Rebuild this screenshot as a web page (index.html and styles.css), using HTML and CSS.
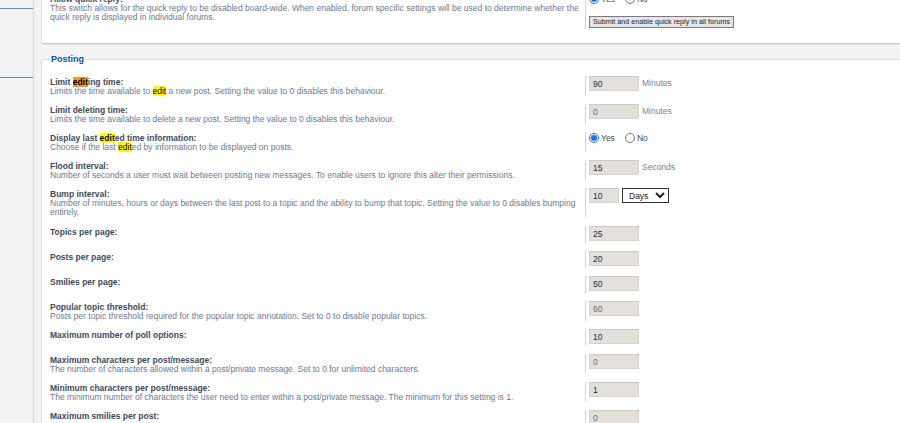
FILE: index.html
```html
<!DOCTYPE html>
<html lang="en">
<head>
  <meta charset="UTF-8">
  <title>Post settings</title>
  <link rel="stylesheet" href="styles.css">
</head>
<body>
  <div class="page">
    <div class="side">
      <div class="menu-item first"></div>
      <div class="menu-item"></div>
    </div>
    <div class="main">
      <fieldset class="panel top">
        <dl>
          <dt><label>Allow quick reply:</label><span class="explain">This switch allows for the quick reply to be disabled board-wide. When enabled, forum specific settings will be used to determine whether the quick reply is displayed in individual forums.</span></dt>
          <dd>
            <div class="radios"><label><input type="radio" name="qr" checked> Yes</label><label><input type="radio" name="qr"> No</label></div>
            <button class="btn">Submit and enable quick reply in all forums</button>
          </dd>
        </dl>
      </fieldset>

      <fieldset class="panel">
        <legend>Posting</legend>
        <dl>
          <dt><label>Limit <span class="hl cur">edit</span>ing time:</label><span class="explain">Limits the time available to <span class="hl">edit</span> a new post. Setting the value to 0 disables this behaviour.</span></dt>
          <dd><input class="num" type="text" value="90"> <span class="unit">Minutes</span></dd>
        </dl>
        <dl>
          <dt><label>Limit deleting time:</label><span class="explain">Limits the time available to delete a new post. Setting the value to 0 disables this behaviour.</span></dt>
          <dd><input class="num dim" type="text" value="0"> <span class="unit">Minutes</span></dd>
        </dl>
        <dl>
          <dt><label>Display last <span class="hl">edit</span>ed time information:</label><span class="explain">Choose if the last <span class="hl">edit</span>ed by information to be displayed on posts.</span></dt>
          <dd><div class="radios"><label><input type="radio" name="le" checked> Yes</label><label><input type="radio" name="le"> No</label></div></dd>
        </dl>
        <dl>
          <dt><label>Flood interval:</label><span class="explain">Number of seconds a user must wait between posting new messages. To enable users to ignore this alter their permissions.</span></dt>
          <dd><input class="num" type="text" value="15"> <span class="unit">Seconds</span></dd>
        </dl>
        <dl class="tall">
          <dt><label>Bump interval:</label><span class="explain">Number of minutes, hours or days between the last post to a topic and the ability to bump that topic. Setting the value to 0 disables bumping entirely.</span></dt>
          <dd><input class="num short" type="text" value="10"> <select class="sel"><option>Days</option><option>Hours</option><option>Minutes</option></select></dd>
        </dl>
        <dl>
          <dt><label>Topics per page:</label></dt>
          <dd><input class="num" type="text" value="25"></dd>
        </dl>
        <dl>
          <dt><label>Posts per page:</label></dt>
          <dd><input class="num" type="text" value="20"></dd>
        </dl>
        <dl>
          <dt><label>Smilies per page:</label></dt>
          <dd><input class="num" type="text" value="50"></dd>
        </dl>
        <dl>
          <dt><label>Popular topic threshold:</label><span class="explain">Posts per topic threshold required for the popular topic annotation. Set to 0 to disable popular topics.</span></dt>
          <dd><input class="num dim" type="text" value="60"></dd>
        </dl>
        <dl>
          <dt><label>Maximum number of poll options:</label></dt>
          <dd><input class="num" type="text" value="10"></dd>
        </dl>
        <dl>
          <dt><label>Maximum characters per post/message:</label><span class="explain">The number of characters allowed within a post/private message. Set to 0 for unlimited characters.</span></dt>
          <dd><input class="num dim" type="text" value="0"></dd>
        </dl>
        <dl>
          <dt><label>Minimum characters per post/message:</label><span class="explain">The minimum number of characters the user need to enter within a post/private message. The minimum for this setting is 1.</span></dt>
          <dd><input class="num" type="text" value="1"></dd>
        </dl>
        <dl>
          <dt><label>Maximum smilies per post:</label></dt>
          <dd><input class="num dim" type="text" value="0"></dd>
        </dl>
      </fieldset>
    </div>
  </div>
</body>
</html>
```

FILE: styles.css
```css
html, body { margin: 0; padding: 0; }
body { font-family: "Liberation Sans", Arial, sans-serif; font-size: 8.5px; line-height: 9px; background: #f3f3f3; color: #3d4a5e; overflow: hidden; }

.page { display: flex; align-items: flex-start; height: 423px; }
.side { width: 33px; flex: none; height: 100%; border-right: 1px solid #d6d6d6; background: #f3f3f3; }
.menu-item { height: 0; border-bottom: 1px solid #5b8dbd; margin-bottom: 68px; }
.menu-item.first { margin-top: 8px; }

.main { flex: 1; padding-left: 7px; margin-top: -12px; overflow: hidden; }

.panel { margin: 0 -10px 10px 0; padding: 7px 8px 10px; border: 1px solid #dedede; border-bottom-color: #c9c9c9; border-radius: 3px; background: #fff; box-shadow: 0 1px 0 #e6e6e6; }
.panel legend { font-size: 9px; line-height: 11px; font-weight: bold; color: #115098; padding: 0 1px; margin-left: 0; }
.panel.top { padding-top: 0; padding-bottom: 11px; }

dl { display: flex; margin: 0; padding: 4px 0; }
dl.tall { padding-bottom: 5px; }
dt { width: 529px; flex: none; padding: 2px 6px 0 0; }
dt label { display: block; font-weight: bold; color: #3d4a5e; }
.explain { display: block; color: #6c7a91; }
dd { margin: 0; padding-left: 3px; border-left: 1px solid #d3d3d3; display: flex; align-items: flex-start; flex-wrap: wrap; gap: 0 3px; align-content: flex-start; }

.hl { background: #ffff00; color: #000; }
.hl.cur { background: #f6962f; }

.num { box-sizing: border-box; width: 50px; height: 15px; margin: 0 0 2px; padding: 0 3px; font: 8.5px "Liberation Sans", Arial, sans-serif; color: #1c2b45; background: #e3e0db; border: 1px solid #d6d2cb; border-top-color: #cdc9c2; outline: none; }
.num.short { width: 30px; }
.num.dim { color: #6a6a6a; }
.unit { color: #7a8392; line-height: 14px; }

.sel { box-sizing: border-box; width: 47px; height: 15px; margin: 0; padding: 0 2px; font: 8.5px "Liberation Sans", Arial, sans-serif; color: #222; background: #fff; border: 1px solid #333; border-radius: 0; }

.radios { display: flex; gap: 10px; width: 100%; align-items: center; color: #3d4a5e; padding-top: 1px; }
.radios label { display: flex; align-items: center; gap: 1px; }
.radios input { width: 10px; height: 10px; margin: 0 1px 0 0; accent-color: #1a73e8; }

.btn { margin-top: 12px; padding: 1px 3px; height: 12px; font: 7.2px/8px "Liberation Sans", Arial, sans-serif; color: #222; background: #e6e6e6; border: 1px solid #7a7a7a; border-radius: 0; white-space: nowrap; }
```
